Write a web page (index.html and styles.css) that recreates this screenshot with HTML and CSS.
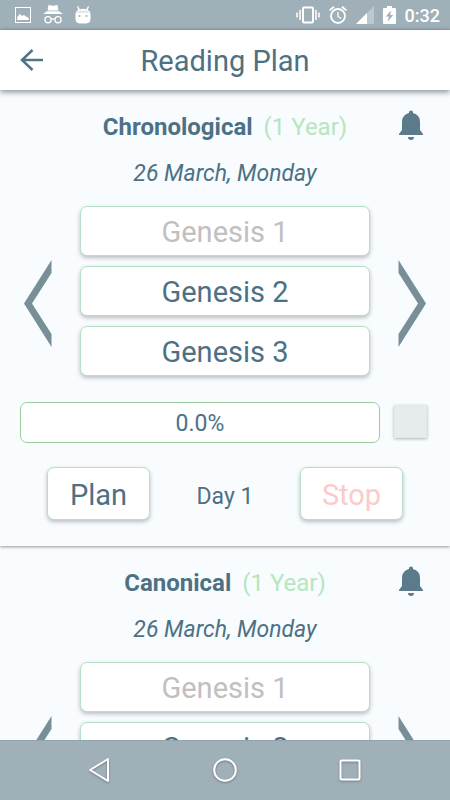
FILE: index.html
```html
<!DOCTYPE html>
<html lang="en">
<head>
<meta charset="utf-8">
<meta name="viewport" content="width=device-width, initial-scale=1">
<title>Reading Plan</title>
<link rel="stylesheet" href="styles.css">
</head>
<body>
<div class="status">
  <div class="status-group notifications">
    <svg width="16" height="16" viewBox="0 0 16 16"><path fill="#fff" fill-rule="evenodd" d="M0 0H16V16H0ZM1 1V15H15V1ZM2.200 13V10L5 7L7 9L9 8L11 9.500L13.800 11V13Z"/></svg>
    <svg width="20" height="19" viewBox="0 0 20 19"><g fill="#fff"><path d="M6 0Q8 .8 10 .8T14 0Q15 0 15.300 5.500H4.700Q5 0 6 0ZM4 6.300H16L20 9H0Z"/></g><g fill="none" stroke="#fff" stroke-width="1.300"><circle cx="5" cy="14.800" r="3.100"/><circle cx="15" cy="14.800" r="3.100"/><path d="M8 14.500Q10 13.500 12 14.500"/></g></svg>
    <svg width="16" height="18" viewBox="0 0 16 18"><path fill="#fff" fill-rule="evenodd" d="M3 0L4.800 3.200Q8 2.500 11.200 3.200L13 0L14 .5L12.800 4Q15.500 5 15.500 8.500V13Q15.500 17.500 10 17.500H6Q.5 17.500 .5 13V8.500Q.5 5 3.200 4L2 .5ZM4.500 9A1 1 0 1 0 4.500 11A1 1 0 1 0 4.500 9ZM11.500 9A1 1 0 1 0 11.500 11A1 1 0 1 0 11.500 9Z"/><path d="M1.500 7Q2 5 4 4.500H12Q14 5 14.500 7Z" fill="#e3e8ea"/></svg>
  </div>
  <div class="status-group system">
    <svg width="24" height="18" viewBox="0 0 24 18"><rect x="7" y="1.500" width="10" height="15" rx="1" fill="none" stroke="#fff" stroke-width="2"/><path d="M4 4V14M1 6.500V11.500M20 4V14M23 6.500V11.500" stroke="#fff" stroke-width="1.500"/></svg>
    <svg width="18" height="18" viewBox="0 0 18 18" fill="none" stroke="#fff"><circle cx="9" cy="10" r="7" stroke-width="1.800"/><path d="M.6 4.400L5 .8M17.400 4.400L13 .8" stroke-width="1.800"/><path d="M9 6V10.500L12.200 12.500" stroke-width="1.300"/></svg>
    <svg width="18" height="18" viewBox="0 0 18 18" fill="#fff"><path d="M18 0V18H0Z" opacity=".3"/><path d="M11 7V18H0Z"/></svg>
    <svg width="13" height="18" viewBox="0 0 13 18"><path fill="#fff" fill-rule="evenodd" d="M4 0H9V2H12Q13 2 13 3V17Q13 18 12 18H1Q0 18 0 17V3Q0 2 1 2H4ZM8 4.500L2.800 10.500H5.700L5 15.500L10.200 9H7.200Z"/></svg>
    <span class="clock">0:32</span>
  </div>
</div>

<header class="appbar">
  <button class="icon-button" aria-label="Back"><svg width="24" height="22" viewBox="0 0 24 22" fill="none" stroke="#4f7485" stroke-width="2.500"><path d="M23 11H2.500M12.500 1L2 11L12.500 21"/></svg></button>
  <h1>Reading Plan</h1>
</header>

<main class="plans">
  <section class="plan">
    <div class="plan-head">
      <h2>Chronological <span class="length">(1 Year)</span></h2>
      <button class="icon-button" aria-label="Reminder"><svg width="24" height="30" viewBox="0 0 24 30" fill="#5b7b8a"><path d="M12 .5A2 2 0 0 1 14 3Q21 5 21 12V20L24 24V25H0V24L3 20V12Q3 5 10 3A2 2 0 0 1 12 .5ZM9 27H15A3 3 0 0 1 9 27Z"/></svg></button>
    </div>
    <p class="date">26 March, Monday</p>
    <div class="reader">
      <button class="icon-button" aria-label="Previous day"><svg width="28" height="88" viewBox="0 0 28 88"><path fill="#788f98" d="M27.500 0V13L8 43.500L27.500 74V87L0 43.500Z"/></svg></button>
      <div class="chapters">
        <button class="raised read">Genesis 1</button>
        <button class="raised">Genesis 2</button>
        <button class="raised">Genesis 3</button>
      </div>
      <button class="icon-button" aria-label="Next day"><svg width="28" height="88" viewBox="0 0 28 88"><path fill="#788f98" d="M.5 0V13L20 43.500L.5 74V87L28 43.500Z"/></svg></button>
    </div>
    <div class="progress-row">
      <div class="progress">0.0%</div>
      <input class="done" type="checkbox" aria-label="Mark day as read">
    </div>
    <div class="actions">
      <button class="raised">Plan</button>
      <span class="day">Day 1</span>
      <button class="raised stop">Stop</button>
    </div>
  </section>

  <section class="plan">
    <div class="plan-head">
      <h2>Canonical <span class="length">(1 Year)</span></h2>
      <button class="icon-button" aria-label="Reminder"><svg width="24" height="30" viewBox="0 0 24 30" fill="#5b7b8a"><path d="M12 .5A2 2 0 0 1 14 3Q21 5 21 12V20L24 24V25H0V24L3 20V12Q3 5 10 3A2 2 0 0 1 12 .5ZM9 27H15A3 3 0 0 1 9 27Z"/></svg></button>
    </div>
    <p class="date">26 March, Monday</p>
    <div class="reader">
      <button class="icon-button" aria-label="Previous day"><svg width="28" height="88" viewBox="0 0 28 88"><path fill="#788f98" d="M27.500 0V13L8 43.500L27.500 74V87L0 43.500Z"/></svg></button>
      <div class="chapters">
        <button class="raised read">Genesis 1</button>
        <button class="raised">Genesis 2</button>
      </div>
      <button class="icon-button" aria-label="Next day"><svg width="28" height="88" viewBox="0 0 28 88"><path fill="#788f98" d="M.5 0V13L20 43.500L.5 74V87L28 43.500Z"/></svg></button>
    </div>
  </section>
</main>

<nav class="navbar">
  <button class="icon-button" aria-label="Back"><svg width="24" height="26" viewBox="0 0 24 26"><path d="M20 2V24L2 13Z" fill="none" stroke="#fff" stroke-width="2" stroke-linejoin="round"/></svg></button>
  <button class="icon-button" aria-label="Home"><svg width="24" height="26" viewBox="0 0 24 26"><circle cx="12" cy="13" r="10.800" fill="none" stroke="#fff" stroke-width="2"/></svg></button>
  <button class="icon-button" aria-label="Recent apps"><svg width="24" height="26" viewBox="0 0 24 26"><rect x="2.500" y="3.500" width="19" height="19" rx="1" fill="none" stroke="#fff" stroke-width="2"/></svg></button>
</nav>
</body>
</html>
```
FILE: styles.css
```css
* {
  box-sizing: border-box;
}

body {
  margin: 0;
  height: 100vh;
  display: flex;
  flex-direction: column;
  overflow: hidden;
  background: #f8fcff;
  color: #4d7184;
  font-family: Roboto, "Liberation Sans", sans-serif;
  font-size: 23px;
}

h1, h2, p {
  margin: 0;
}

svg {
  display: block;
}

button {
  font: inherit;
  color: inherit;
}

.icon-button {
  display: flex;
  align-items: center;
  justify-content: center;
  padding: 0;
  border: 0;
  background: none;
}

.status {
  flex: none;
  display: flex;
  justify-content: space-between;
  align-items: center;
  height: 30px;
  padding: 0 10px 0 15px;
  background: #a0b0b8;
  border-bottom: 1px solid #90a4ae;
}

.status-group {
  display: flex;
  align-items: center;
}

.notifications {
  gap: 12px;
}

.system {
  gap: 9px;
}

.clock {
  padding-top: 2px;
  color: #fff;
  font-size: 18px;
  font-weight: 500;
}

.appbar {
  flex: none;
  position: relative;
  z-index: 2;
  display: grid;
  grid-template-columns: 24px 1fr 24px;
  align-items: center;
  height: 60px;
  padding: 0 20px;
  background: #fff;
  box-shadow: 0 2px 6px rgba(0, 0, 0, 0.45);
}

.appbar h1 {
  padding-top: 2px;
  font-size: 29px;
  font-weight: 400;
  line-height: 58px;
  text-align: center;
}

.plans {
  flex: 1;
  min-height: 0;
  overflow: hidden;
}

.plan {
  position: relative;
  padding: 20px 0 26px;
  background: #f8fcff;
}

.plan:first-child {
  z-index: 1;
  box-shadow: 0 1px 3px rgba(0, 0, 0, 0.4);
}

.plan-head {
  display: grid;
  grid-template-columns: 32px 1fr 32px;
  align-items: start;
  padding: 0 23px;
}

.plan-head h2 {
  grid-column: 2;
  font-size: 24px;
  font-weight: 700;
  line-height: 35px;
  text-align: center;
}

.length {
  margin-left: 5px;
  color: #b5e6bd;
  font-weight: 400;
}

.date {
  margin-top: 12px;
  line-height: 34px;
  font-style: italic;
  text-align: center;
}

.reader {
  display: grid;
  grid-template-columns: 28px 1fr 28px;
  gap: 28px;
  align-items: center;
  margin-top: 15px;
  padding: 0 24px;
}

.chapters {
  display: grid;
  gap: 10px;
  align-content: start;
  min-height: 196px;
  padding-bottom: 26px;
}

.raised {
  height: 50px;
  padding: 2px 0 0;
  border: 1px solid #b5dfc6;
  border-radius: 7px;
  background: #fff;
  box-shadow: 0 2px 4px rgba(0, 0, 0, 0.25);
  font-size: 29px;
}

.read {
  color: #c0c0c0;
}

.progress-row {
  display: flex;
  align-items: center;
  gap: 14px;
  padding: 0 23px 0 20px;
}

.progress {
  flex: 1;
  padding-top: 2px;
  border: 1px solid #9acb9d;
  border-radius: 7px;
  background: #fff;
  line-height: 37px;
  text-align: center;
}

.done {
  appearance: none;
  width: 33px;
  height: 33px;
  margin: 0 0 2px;
  border: 1px solid #e3e8ea;
  background: #e6ebed;
  box-shadow: 0 1px 3px rgba(0, 0, 0, 0.3);
}

.actions {
  display: grid;
  grid-template-columns: 103px 1fr 103px;
  align-items: center;
  margin-top: 24px;
  padding: 0 47px;
  text-align: center;
}

.actions .raised {
  height: 53px;
}

.actions .day {
  padding-top: 6px;
}

.actions .stop {
  color: #fbcaca;
}

.navbar {
  flex: none;
  position: relative;
  z-index: 2;
  display: flex;
  align-items: center;
  justify-content: center;
  gap: 101px;
  height: 60px;
  padding-bottom: 2px;
  background: #a0b0b8;
  border-top: 1px solid #90a4ae;
}

.navbar svg {
  filter: drop-shadow(0 1px 1px rgba(0, 0, 0, 0.3));
}
```
